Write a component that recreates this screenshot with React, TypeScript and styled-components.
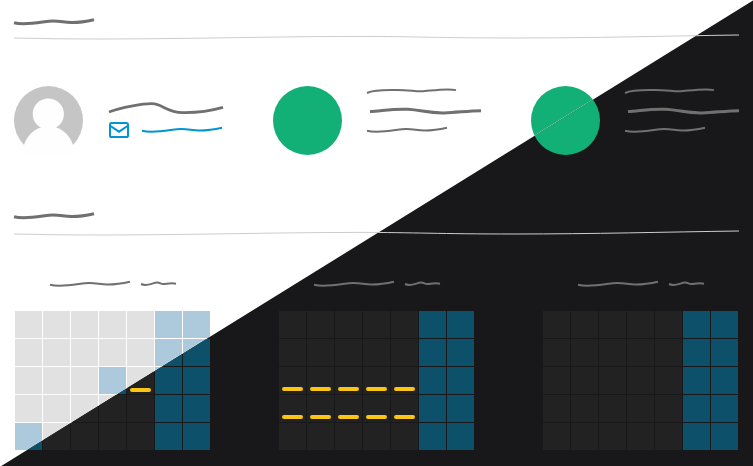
import React from "react";
import styled, { createGlobalStyle, css, ThemeProvider } from "styled-components";

const GlobalStyle = createGlobalStyle`
  body { margin: 0; background: #ffffff; font-family: "Liberation Sans", Arial, sans-serif; }
`;

const light = { page: "#ffffff", day: "#e1e1e1", marked: "#adcadc", clip: "polygon(0 0, 753.3px 0, 0 466.3px)" };
const dark = { page: "#18181a", day: "#222222", marked: "#0d5069", clip: "polygon(753.9px 0, 760px 470px, 0 470px, 0 466.8px)" };
type Palette = typeof light;

const Preview = styled.main`
  display: grid;
  width: 753px;
  height: 466px;
  overflow: hidden;
`;

const Layer = styled.div<{ theme: Palette }>`
  grid-area: 1 / 1;
  width: 753px;
  height: 466px;
  box-sizing: border-box;
  padding: 18px 14px 0;
  overflow: hidden;
  background: ${({ theme }) => theme.page};
  clip-path: ${({ theme }) => theme.clip};
`;

const SectionHeader = styled.header<{ $gap: number }>`
  display: flex;
  flex-direction: column;
  align-items: flex-start;
  gap: ${({ $gap }) => $gap}px;
`;

const Stroke = styled.svg<{ $weight: number; $tone?: string }>`
  display: block;
  flex: none;
  overflow: visible;
  fill: none;
  stroke: ${({ $tone }) => $tone ?? "#707070"};
  stroke-width: ${({ $weight }) => $weight};
`;

const Contacts = styled.section`
  display: grid;
  grid-template-columns: 259px 258px 208px;
  height: 69px;
  margin: 46px 0 57px;
`;

const Contact = styled.article<{ $gap: number }>`
  display: flex;
  gap: ${({ $gap }) => $gap}px;
`;

const Status = styled.div`
  width: 69px;
  height: 69px;
  border-radius: 50%;
  background: #12b076;
`;

const Avatar = styled.svg`
  display: block;
  flex: none;
`;

const Details = styled.div<{ $top: number; $gap: number }>`
  display: flex;
  flex-direction: column;
  gap: ${({ $gap }) => $gap}px;
  padding-top: ${({ $top }) => $top}px;
`;

const Indent = styled.div`
  padding-left: 3px;
  margin-bottom: -4px;
`;

const Mail = styled.div`
  display: flex;
  align-items: center;
  gap: 13px;
`;

const Months = styled.section`
  display: grid;
  grid-template-columns: repeat(3, 195px);
  column-gap: 69px;
  padding-left: 1px;
  margin-top: 44px;
`;

const MonthName = styled.div`
  display: flex;
  gap: 11px;
  height: 31px;
  padding-left: 35px;
`;

const Days = styled.div`
  display: grid;
  grid-template-columns: repeat(7, 27px);
  grid-auto-rows: 27px;
  gap: 1px;
`;

const Day = styled.div<{ $marked: boolean; theme: Palette }>`
  display: flex;
  justify-content: center;
  background: ${({ $marked, theme }) => ($marked ? theme.marked : theme.day)};
`;

const Event = styled.span<{ $low?: boolean }>`
  width: 21px;
  height: 4px;
  margin-top: 20px;
  border-radius: 2px;
  background: #fac515;
  ${({ $low }) => $low && css`margin-top: 21px;`}
`;

const Wave = ({ weight = 2, tone }: { weight?: number; tone?: string }) => (
  <Stroke $weight={weight} $tone={tone} width="80" height="8" viewBox="0 0 80 8">
    <path d="M0 4.7 C11 7.6 28 3.8 35 3.2 C45 2.4 49 4.4 57 4.6 C66 4.7 73 3.4 80 1.8" />
  </Stroke>
);

const Rule = () => (
  <Stroke $weight={1} $tone="#cdcdcd" width="725" height="6" viewBox="0 0 725 6">
    <path d="M0 4 C115 7 235 2.4 345 2.4 C400 2.4 425 4 500 4 C580 4 650 2 725 1" />
  </Stroke>
);

const Header = ({ gap }: { gap: number }) => (
  <SectionHeader $gap={gap}>
    <Wave weight={3} />
    <Rule />
  </SectionHeader>
);

const Person = () => (
  <Contact $gap={26}>
    <Avatar width="69" height="69" viewBox="0 0 69 69">
      <circle cx="34.5" cy="34.5" r="34.5" fill="#c5c5c5" />
      <g fill="#fefefe">
        <circle cx="34.3" cy="28" r="15.6" />
        <path d="M10 59 C13 50 19 44 27 41.5 H42 C50 44 56 50 59 59 V70 H10Z" />
      </g>
    </Avatar>
    <Details $top={16} $gap={8}>
      <Stroke $weight={2.8} width="114" height="12" viewBox="0 0 114 12">
        <path d="M0 10 C14 4.9 35 1.5 43 1.7 C54 2 57 10.3 74 10.6 C91 10.9 103 8.5 114 5.4" />
      </Stroke>
      <Mail>
        <Stroke $weight={2} $tone="#0095d3" width="20" height="16" viewBox="0 0 20 16">
          <rect x="1" y="1" width="18" height="14" rx="1.6" />
          <path d="M1.5 4 L10 9.7 L18.5 4" />
        </Stroke>
        <Wave tone="#0095d3" />
      </Mail>
    </Details>
  </Contact>
);

const Service = () => (
  <Contact $gap={25}>
    <Status />
    <Details $top={2} $gap={15}>
      <Stroke $weight={2} width="89" height="6" viewBox="0 0 89 6">
        <path d="M0 5 C9 .8 25 2.2 37 2.2 C45 2.2 49 4 58 3.1 C69 2 81 .2 89 2.1" />
      </Stroke>
      <Indent>
        <Stroke $weight={3} width="111" height="6" viewBox="0 0 111 6">
          <path d="M0 2.5 C11 2 24 -.6 38 .3 C52 1.2 58 4.2 74 3.9 C88 3.4 98 2 111 1.8" />
        </Stroke>
      </Indent>
      <Wave weight={2} />
    </Details>
  </Contact>
);

const cells = Array.from({ length: 35 }, (_, index) => index);

type MonthProps = { marked?: number[]; events?: number[]; low?: boolean };
const Month = ({ marked = [], events = [], low }: MonthProps) => (
  <article>
    <MonthName>
      <Wave />
      <Stroke $weight={2} width="35" height="8" viewBox="0 0 35 8">
        <path d="M0 4 C6 7 12 2.5 16 2.5 C20 2.5 19 4.2 23 4 C27 3.6 31 2.7 35 3.7" />
      </Stroke>
    </MonthName>
    <Days>
      {cells.map((day) => (
        <Day key={day} $marked={day % 7 > 4 || marked.includes(day)}>
          {events.includes(day) && <Event $low={low} />}
        </Day>
      ))}
    </Days>
  </article>
);

const Dashboard = () => (
  <Layer>
    <Header gap={8} />
    <Contacts>
      <Person />
      <Service />
      <Service />
    </Contacts>
    <Header gap={10} />
    <Months>
      <Month marked={[17, 28]} events={[18]} low />
      <Month events={[14, 15, 16, 17, 18, 21, 22, 23, 24, 25]} />
      <Month />
    </Months>
  </Layer>
);

export default function App() {
  return (
    <>
      <GlobalStyle />
      <Preview>
        {[light, dark].map((palette) => (
          <ThemeProvider key={palette.page} theme={palette}>
            <Dashboard />
          </ThemeProvider>
        ))}
      </Preview>
    </>
  );
}
